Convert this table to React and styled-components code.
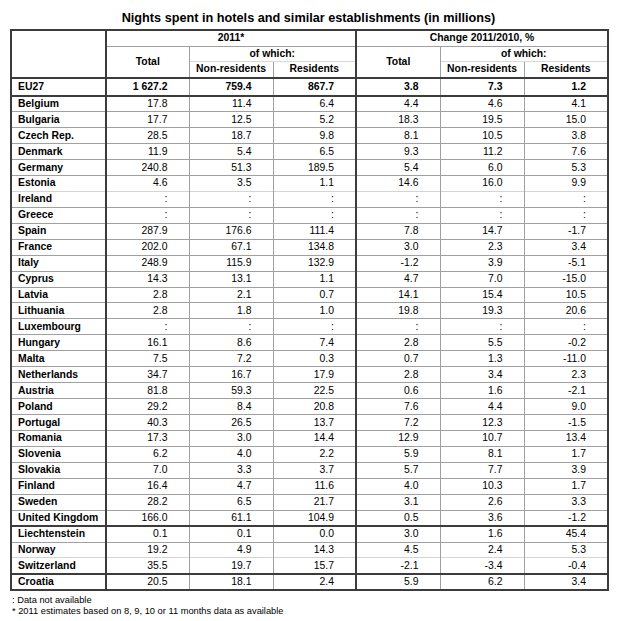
import React from "react";
import styled, { createGlobalStyle } from "styled-components";

const GlobalStyle = createGlobalStyle`
  body {
    margin: 0;
    background: #ffffff;
    font-family: "Liberation Sans", Arial, sans-serif;
    color: #000000;
  }
`;

const Page = styled.div`
  width: 623px;
  padding: 10px 0 0 10px;
  box-sizing: border-box;
`;

const Title = styled.h1`
  width: 597px;
  margin: 0 0 3px 0;
  font-size: 12.7px;
  line-height: 16px;
  font-weight: bold;
  text-align: center;
`;

const Table = styled.table`
  width: 597px;
  border-collapse: collapse;
  table-layout: fixed;
  border: 2px solid #3c3c3c;
  font-size: 10.4px;
  line-height: 12px;
`;

const HeadCell = styled.th`
  font-weight: bold;
  text-align: center;
  padding: 0;
  height: 14.6px;
  border-left: ${(p) => (p.$thickLeft ? "2px solid #3c3c3c" : "1px solid #a0a0a0")};
  border-top: ${(p) => (p.$lightTop ? "1px solid #d8d8d8" : "1px solid #a0a0a0")};
  vertical-align: middle;
`;

const Row = styled.tr`
  height: ${(p) => (p.$tall ? "18px" : "15.95px")};
  & > td {
    border-top: ${(p) =>
      p.$top === "thick"
        ? "2px solid #3c3c3c"
        : p.$top === "light"
        ? "1px solid #d4d4d4"
        : "1px solid #a0a0a0"};
  }
`;

const Name = styled.td`
  font-weight: bold;
  padding: 0 0 0 6px;
  text-align: left;
  white-space: nowrap;
`;

const Num = styled.td`
  text-align: right;
  padding: 0 21px 0 0;
  font-weight: ${(p) => (p.$bold ? "bold" : "normal")};
  border-left: ${(p) => (p.$thickLeft ? "2px solid #3c3c3c" : "1px solid #a0a0a0")};
`;

const Notes = styled.div`
  margin-top: 4px;
  padding-left: 2px;
  font-size: 9.3px;
  line-height: 11px;
`;

const rows = [
  ["Belgium", "17.8", "11.4", "6.4", "4.4", "4.6", "4.1", "thick"],
  ["Bulgaria", "17.7", "12.5", "5.2", "18.3", "19.5", "15.0"],
  ["Czech Rep.", "28.5", "18.7", "9.8", "8.1", "10.5", "3.8"],
  ["Denmark", "11.9", "5.4", "6.5", "9.3", "11.2", "7.6"],
  ["Germany", "240.8", "51.3", "189.5", "5.4", "6.0", "5.3"],
  ["Estonia", "4.6", "3.5", "1.1", "14.6", "16.0", "9.9"],
  ["Ireland", ":", ":", ":", ":", ":", ":", "light"],
  ["Greece", ":", ":", ":", ":", ":", ":"],
  ["Spain", "287.9", "176.6", "111.4", "7.8", "14.7", "-1.7"],
  ["France", "202.0", "67.1", "134.8", "3.0", "2.3", "3.4"],
  ["Italy", "248.9", "115.9", "132.9", "-1.2", "3.9", "-5.1"],
  ["Cyprus", "14.3", "13.1", "1.1", "4.7", "7.0", "-15.0"],
  ["Latvia", "2.8", "2.1", "0.7", "14.1", "15.4", "10.5"],
  ["Lithuania", "2.8", "1.8", "1.0", "19.8", "19.3", "20.6"],
  ["Luxembourg", ":", ":", ":", ":", ":", ":"],
  ["Hungary", "16.1", "8.6", "7.4", "2.8", "5.5", "-0.2"],
  ["Malta", "7.5", "7.2", "0.3", "0.7", "1.3", "-11.0"],
  ["Netherlands", "34.7", "16.7", "17.9", "2.8", "3.4", "2.3"],
  ["Austria", "81.8", "59.3", "22.5", "0.6", "1.6", "-2.1"],
  ["Poland", "29.2", "8.4", "20.8", "7.6", "4.4", "9.0"],
  ["Portugal", "40.3", "26.5", "13.7", "7.2", "12.3", "-1.5"],
  ["Romania", "17.3", "3.0", "14.4", "12.9", "10.7", "13.4"],
  ["Slovenia", "6.2", "4.0", "2.2", "5.9", "8.1", "1.7"],
  ["Slovakia", "7.0", "3.3", "3.7", "5.7", "7.7", "3.9"],
  ["Finland", "16.4", "4.7", "11.6", "4.0", "10.3", "1.7"],
  ["Sweden", "28.2", "6.5", "21.7", "3.1", "2.6", "3.3"],
  ["United Kingdom", "166.0", "61.1", "104.9", "0.5", "3.6", "-1.2"],
  ["Liechtenstein", "0.1", "0.1", "0.0", "3.0", "1.6", "45.4", "thick"],
  ["Norway", "19.2", "4.9", "14.3", "4.5", "2.4", "5.3"],
  ["Switzerland", "35.5", "19.7", "15.7", "-2.1", "-3.4", "-0.4", "light"],
  ["Croatia", "20.5", "18.1", "2.4", "5.9", "6.2", "3.4", "thick"],
];

const DataRow = ({ cells, top, bold, tall }) => {
  const [name, ...vals] = cells;
  return (
    <Row $top={top} $tall={tall}>
      <Name>{name}</Name>
      {vals.map((v, i) => (
        <Num key={i} $bold={bold} $thickLeft={i === 0 || i === 3}>
          {v}
        </Num>
      ))}
    </Row>
  );
};

const App = () => {
  return (
    <Page>
      <GlobalStyle />
      <Title>Nights spent in hotels and similar establishments (in millions)</Title>
      <Table>
        <colgroup>
          <col style={{ width: 95 }} />
          <col style={{ width: 83 }} />
          <col style={{ width: 84 }} />
          <col style={{ width: 83 }} />
          <col style={{ width: 84 }} />
          <col style={{ width: 84 }} />
          <col style={{ width: 84 }} />
        </colgroup>
        <thead>
          <tr>
            <HeadCell rowSpan={3} />
            <HeadCell colSpan={3} $thickLeft>2011*</HeadCell>
            <HeadCell colSpan={3} $thickLeft>Change 2011/2010, %</HeadCell>
          </tr>
          <tr>
            <HeadCell rowSpan={2} $thickLeft>Total</HeadCell>
            <HeadCell colSpan={2}>of which:</HeadCell>
            <HeadCell rowSpan={2} $thickLeft>Total</HeadCell>
            <HeadCell colSpan={2}>of which:</HeadCell>
          </tr>
          <tr>
            <HeadCell $lightTop>Non-residents</HeadCell>
            <HeadCell $lightTop>Residents</HeadCell>
            <HeadCell $lightTop>Non-residents</HeadCell>
            <HeadCell $lightTop>Residents</HeadCell>
          </tr>
        </thead>
        <tbody>
          <DataRow
            cells={["EU27", "1 627.2", "759.4", "867.7", "3.8", "7.3", "1.2"]}
            top="thick"
            bold
            tall
          />
          {rows.map((r) => (
            <DataRow key={r[0]} cells={r.slice(0, 7)} top={r[7]} />
          ))}
        </tbody>
      </Table>
      <Notes>
        <div>: Data not available</div>
        <div>* 2011 estimates based on 8, 9, 10 or 11 months data as available</div>
      </Notes>
    </Page>
  );
};

export default App;
